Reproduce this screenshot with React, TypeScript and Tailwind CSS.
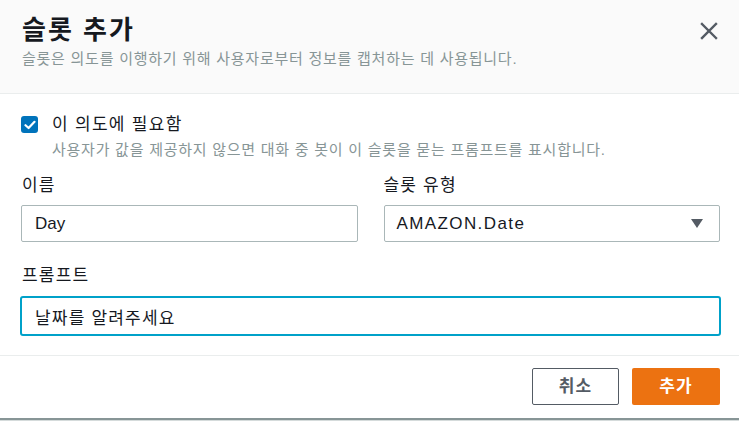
import React, { useState } from 'react';

const font = { fontFamily: '"Liberation Sans", "Noto Sans CJK KR", sans-serif' };

export default function App() {
  const [required, setRequired] = useState(true);
  const [name, setName] = useState('Day');
  const [prompt, setPrompt] = useState('날짜를 알려주세요');

  return (
    <div className="w-[739px] h-[421px] bg-white text-[#16191f] flex flex-col overflow-hidden" style={font}>
      {/* Header */}
      <div className="h-[94px] bg-[#fafafa] border-b border-[#eaeded] flex items-start justify-between pl-[22px] pr-[20px] pt-[13px]">
        <div>
          <h2 className="text-[26px] font-bold leading-[34px] tracking-[2px]">슬롯 추가</h2>
          <p className="text-[15px] text-[#879596] leading-[24px] tracking-[0.75px]">
            슬롯은 의도를 이행하기 위해 사용자로부터 정보를 캡처하는 데 사용됩니다.
          </p>
        </div>
        <button className="mt-[8px] w-[20px] h-[20px] flex items-center justify-center text-[#545b64]">
          <svg width="18" height="18" viewBox="0 0 18 18" fill="none" stroke="currentColor" strokeWidth="2.4" strokeLinecap="square">
            <path d="M2 2 L16 16 M16 2 L2 16" />
          </svg>
        </button>
      </div>

      {/* Body */}
      <div className="flex-1 pl-[21px] pr-[19px] pt-[20px]">
        <label className="flex items-start gap-[14px] cursor-pointer">
          <span
            onClick={() => setRequired(!required)}
            className={`mt-[2px] w-[17px] h-[17px] rounded-[3px] flex items-center justify-center ${required ? 'bg-[#0073bb]' : 'border border-[#aab7b8] bg-white'}`}
          >
            {required && (
              <svg width="12" height="10" viewBox="0 0 12 10" fill="none" stroke="white" strokeWidth="2.2" strokeLinecap="round" strokeLinejoin="round">
                <path d="M1.5 5.2 L4.6 8 L10.5 1.8" />
              </svg>
            )}
          </span>
          <span>
            <span className="block text-[17px] leading-[22px] tracking-[1.3px]">이 의도에 필요함</span>
            <span className="block text-[15px] leading-[20px] mt-[4px] text-[#879596] tracking-[0.75px]">
              사용자가 값을 제공하지 않으면 대화 중 봇이 이 슬롯을 묻는 프롬프트를 표시합니다.
            </span>
          </span>
        </label>

        <div className="grid grid-cols-2 gap-[26px] mt-[13px]">
          <div>
            <div className="text-[17px] leading-[26px] pl-[1px] tracking-[1.2px]">이름</div>
            <input
              value={name}
              onChange={e => setName(e.target.value)}
              className="mt-[6px] w-full h-[37px] border border-[#aab7b8] rounded-[2px] px-[13px] text-[17px] outline-none"
              style={font}
            />
          </div>
          <div>
            <div className="text-[17px] leading-[26px] tracking-[1.2px]">슬롯 유형</div>
            <div className="mt-[6px] w-full h-[37px] border border-[#aab7b8] rounded-[2px] pl-[12px] pr-[16px] flex items-center justify-between">
              <span className="text-[17px] tracking-[1.4px]">AMAZON.Date</span>
              <svg width="12" height="9" viewBox="0 0 12 9" fill="#545b64">
                <path d="M0 0 H12 L6 9 Z" />
              </svg>
            </div>
          </div>
        </div>

        <div className="mt-[21px]">
          <div className="text-[17px] leading-[26px] pl-[1px] tracking-[1.2px]">프롬프트</div>
          <input
            value={prompt}
            onChange={e => setPrompt(e.target.value)}
            className="mt-[7px] w-[701px] -ml-[1px] h-[40px] border-2 border-[#00a1c9] rounded-[3px] px-[13px] text-[17px] tracking-[1.2px] outline-none"
            style={font}
          />
        </div>
      </div>

      {/* Footer */}
      <div className="h-[63px] border-t border-[#eaeded] flex items-start justify-end gap-[13px] pr-[19px] pt-[12px]">
        <button className="w-[87px] h-[37px] border border-[#545b64] rounded-[2px] bg-white text-[#545b64] text-[17px] font-bold tracking-[1px]">
          취소
        </button>
        <button className="w-[88px] h-[37px] rounded-[2px] bg-[#ec7211] text-white text-[17px] font-bold tracking-[1px]">
          추가
        </button>
      </div>
      <div className="h-[2px] bg-[#879596]" />
      <div className="h-[1px] bg-[#d5dbdb]" />
    </div>
  );
}
